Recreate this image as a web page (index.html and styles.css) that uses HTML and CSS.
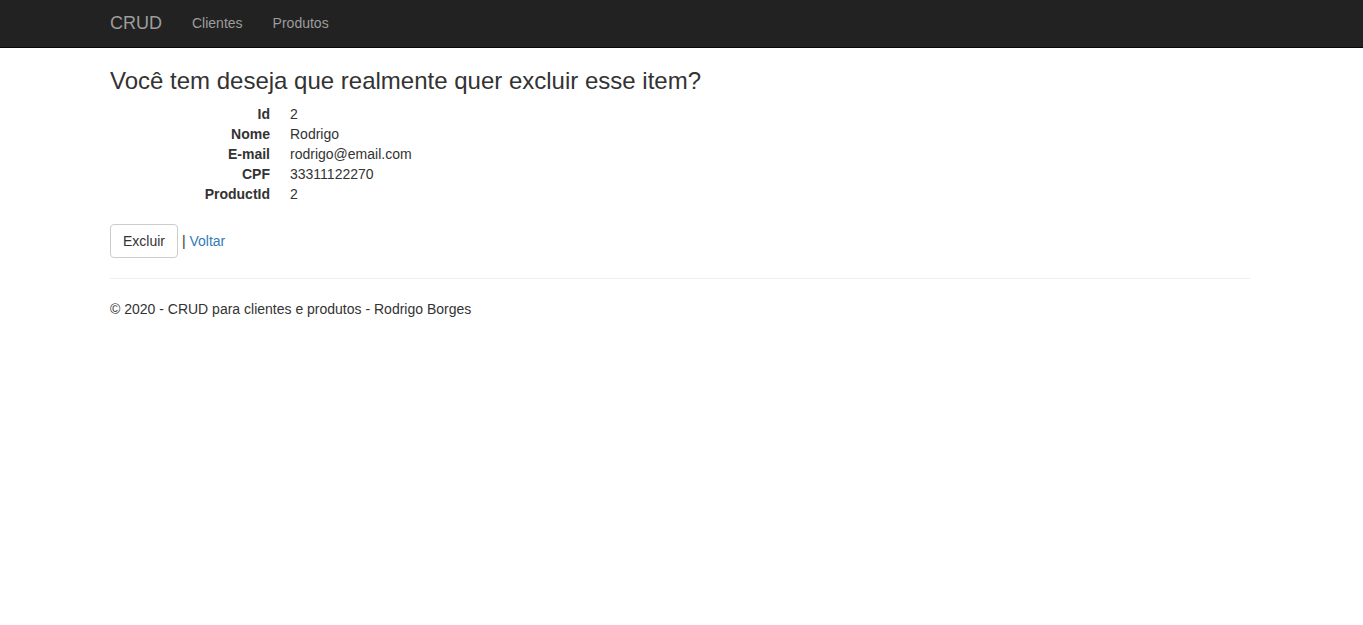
FILE: index.html
```html
<!DOCTYPE html>
<html lang="pt-br">
<head>
<meta charset="utf-8">
<title>Excluir - CRUD</title>
<link rel="stylesheet" href="styles.css">
</head>
<body>
<nav class="navbar">
  <div class="container navbar-inner">
    <a class="brand" href="#">CRUD</a>
    <ul class="nav">
      <li><a href="#">Clientes</a></li>
      <li><a href="#">Produtos</a></li>
    </ul>
  </div>
</nav>
<div class="container body-content">
  <h3 class="title">Você tem deseja que realmente quer excluir esse item?</h3>
  <dl class="details">
    <dt>Id</dt><dd>2</dd>
    <dt>Nome</dt><dd>Rodrigo</dd>
    <dt>E-mail</dt><dd>rodrigo@email.com</dd>
    <dt>CPF</dt><dd>33311122270</dd>
    <dt>ProductId</dt><dd>2</dd>
  </dl>
  <form class="actions">
    <button type="button" class="btn">Excluir</button> | <a href="#" class="link">Voltar</a>
  </form>
  <hr class="rule">
  <footer class="footer">
    <p>© 2020 - CRUD para clientes e produtos - Rodrigo Borges</p>
  </footer>
</div>
</body>
</html>
```
FILE: styles.css
```css
* { box-sizing: border-box; }
html, body { margin: 0; padding: 0; }
body {
  font-family: "Liberation Sans", Arial, sans-serif;
  font-size: 14px;
  line-height: 1.42857143;
  color: #333;
  background: #fff;
}
.container {
  width: 1170px;
  margin: 0 auto;
  padding: 0 15px;
  position: relative;
  left: -1.5px;
}
.navbar {
  background: #222;
  border-bottom: 1px solid #080808;
  height: 48px;
}
.navbar-inner {
  display: flex;
  align-items: stretch;
  height: 47px;
}
.brand {
  color: #9d9d9d;
  font-size: 18px;
  line-height: 20px;
  padding: 13px 15px 14px;
  margin-left: -15px;
  text-decoration: none;
}
.nav {
  display: flex;
  list-style: none;
  margin: 0;
  padding: 0;
}
.nav a {
  display: block;
  color: #9d9d9d;
  text-decoration: none;
  line-height: 20px;
  padding: 13px 15px 14px;
}
.title {
  font-size: 24px;
  font-weight: 500;
  line-height: 1.1;
  margin: 20px 0 10px;
  color: #333;
}
.details {
  display: grid;
  grid-template-columns: 160px 1fr;
  column-gap: 20px;
  margin: 0 0 20px;
}
.details dt {
  font-weight: bold;
  text-align: right;
  white-space: nowrap;
}
.details dd { margin: 0; }
.actions { margin: 0; }
.btn {
  font-family: inherit;
  font-size: 14px;
  line-height: 20px;
  padding: 6px 12px;
  color: #333;
  background: #fff;
  border: 1px solid #ccc;
  border-radius: 4px;
  cursor: pointer;
}
.link { color: #337ab7; text-decoration: none; }
.rule {
  border: 0;
  border-top: 1px solid #eee;
  margin: 20px 0;
}
.footer p { margin: 0 0 10px; }
```
